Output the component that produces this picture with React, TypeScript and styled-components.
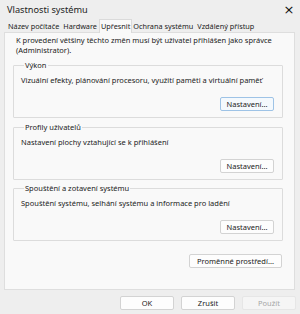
import styled, { createGlobalStyle } from "styled-components";

const GlobalStyle = createGlobalStyle`
  html, body {
    margin: 0;
    padding: 0;
    background: #eeeeee;
  }
  body {
    font-family: "Noto Sans", "Open Sans", sans-serif;
    font-size: 7.5px;
    color: #1b1b1b;
  }
`;

const Window = styled.div`
  width: 300px;
  height: 314px;
  display: flex;
  flex-direction: column;
  background: #eeeeee;
`;

const TitleBar = styled.div`
  height: 19px;
  display: flex;
  align-items: center;
  padding: 0 3px 0 7px;
`;

const Title = styled.div`
  flex: 1;
  font-size: 9.2px;
  color: #222;
`;

const CloseButton = styled.div`
  width: 16px;
  height: 16px;
  display: flex;
  align-items: center;
  justify-content: center;
  font-family: "DejaVu Sans", sans-serif;
  font-size: 13px;
  line-height: 16px;
  color: #111111;
`;

const TabRow = styled.div`
  display: flex;
  align-items: flex-end;
  height: 13px;
  padding: 0 0 0 6px;
  font-size: 7.3px;
`;

const Tab = styled.div<{ active?: boolean }>`
  height: ${({ active }) => (active ? "13px" : "11px")};
  line-height: ${({ active }) => (active ? "12px" : "11px")};
  padding: 0 1px;
  margin: ${({ active }) => (active ? "0 -1px -1px 0" : "0 1px")};
  background: ${({ active }) => (active ? "#f9f9f9" : "transparent")};
  border: ${({ active }) => (active ? "1px solid #dadada" : "none")};
  border-bottom: none;
  position: relative;
  z-index: ${({ active }) => (active ? 1 : 0)};
  white-space: nowrap;
`;

const Panel = styled.div`
  box-sizing: border-box;
  margin: 0 5px 0 4px;
  height: 258px;
  background: #f9f9f9;
  border: 1px solid #dedede;
  padding: 3px 11px 0 8px;
  display: flex;
  flex-direction: column;
`;

const Notice = styled.p`
  margin: 0 0 6px 3px;
  line-height: 9.5px;
`;

const Group = styled.fieldset`
  margin: 0 0 4.5px;
  padding: 5px 8px 6px 7px;
  border: 1px solid #dcdcdc;
  border-radius: 1px;
  min-width: 0;
`;

const Legend = styled.legend`
  padding: 0 1px;
  margin-left: 3px;
  line-height: 9px;
`;

const GroupBody = styled.div`
  height: 36px;
  display: flex;
  flex-direction: column;
  justify-content: space-between;
`;

const GroupText = styled.div`
  line-height: 10px;
`;

const ButtonRow = styled.div<{ pad?: number; top?: number }>`
  display: flex;
  justify-content: flex-end;
  padding-right: ${({ pad }) => pad ?? 0}px;
  margin-top: ${({ top }) => top ?? 0}px;
`;

const Button = styled.button<{ focused?: boolean; w?: number }>`
  font-family: inherit;
  font-size: 7.5px;
  width: ${({ w }) => w ?? 54}px;
  height: 14px;
  padding: 0;
  border-radius: 2px;
  border: 1px solid ${({ focused }) => (focused ? "#9ec3e6" : "#d3d3d3")};
  background: ${({ focused }) => (focused ? "#f4f9fd" : "#fdfdfd")};
  color: #1b1b1b;

  &:disabled {
    background: #f5f5f5;
    border-color: #e6e6e6;
    color: #a5a5a5;
  }
`;

const Footer = styled.div`
  display: flex;
  justify-content: flex-end;
  gap: 7px;
  padding: 6px 4px 0 0;
`;

const groups = [
  {
    title: "Výkon",
    text: "Vizuální efekty, plánování procesoru, využití paměti a virtuální paměť",
    focused: true,
  },
  {
    title: "Profily uživatelů",
    text: "Nastavení plochy vztahující se k přihlášení",
  },
  {
    title: "Spouštění a zotavení systému",
    text: "Spouštění systému, selhání systému a informace pro ladění",
  },
];

const tabs = ["Název počítače", "Hardware", "Upřesnit", "Ochrana systému", "Vzdálený přístup"];

export default function App() {
  return (
    <>
      <GlobalStyle />
      <Window>
        <TitleBar>
          <Title>Vlastnosti systému</Title>
          <CloseButton>×</CloseButton>
        </TitleBar>
        <TabRow>
          {tabs.map((t) => (
            <Tab key={t} active={t === "Upřesnit"}>
              {t}
            </Tab>
          ))}
        </TabRow>
        <Panel>
          <Notice>
            K provedení většiny těchto změn musí být uživatel přihlášen jako správce
            (Administrator).
          </Notice>
          {groups.map((g) => (
            <Group key={g.title}>
              <Legend>{g.title}</Legend>
              <GroupBody>
                <GroupText>{g.text}</GroupText>
                <ButtonRow>
                  <Button focused={g.focused}>Nastavení...</Button>
                </ButtonRow>
              </GroupBody>
            </Group>
          ))}
          <ButtonRow pad={1} top={8}>
            <Button w={93}>Proměnné prostředí...</Button>
          </ButtonRow>
        </Panel>
        <Footer>
          <Button>OK</Button>
          <Button>Zrušit</Button>
          <Button disabled>Použít</Button>
        </Footer>
      </Window>
    </>
  );
}
